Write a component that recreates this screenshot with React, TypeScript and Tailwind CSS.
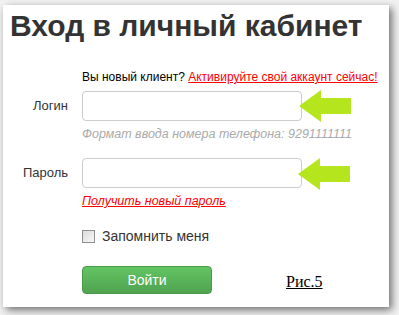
import React from 'react';

const Arrow: React.FC<{ className?: string }> = ({ className }) => (
  <svg className={className} width="52" height="32" viewBox="0 0 52 32">
    <polygon points="0,16 22,0 22,8 52,8 52,24 22,24 22,32" fill="#b5e61d" />
  </svg>
);

const App: React.FC = () => {
  return (
    <div className="w-[399px] h-[315px] bg-[#f2f2f2] pt-[5px] pl-[3px] font-['Liberation_Sans',Arial,sans-serif]">
      <div className="relative w-[386px] h-[302px] bg-white shadow-[3px_3px_8px_rgba(0,0,0,0.55)]">
        <h1 className="pl-[7px] pt-[3px] text-[30px] leading-[36px] font-bold text-[#333]">
          Вход в личный кабинет
        </h1>

        <p className="mt-[26px] pl-[79px] text-[12px] leading-[14px] text-black">
          Вы новый клиент?{' '}
          <a href="#" className="text-[#ff0000] underline">Активируйте свой аккаунт сейчас!</a>
        </p>

        <div className="mt-[7px] flex items-center">
          <label className="w-[65px] text-right text-[13px] text-[#333]">Логин</label>
          <input className="ml-[14px] w-[220px] h-[30px] rounded-[4px] border border-[#ccc] bg-white" />
        </div>
        <p className="mt-[6px] pl-[79px] text-[12.5px] leading-[15px] italic text-[#aaa]">
          Формат ввода номера телефона: 9291111111
        </p>

        <div className="mt-[16px] flex items-center">
          <label className="w-[65px] text-right text-[13px] text-[#333]">Пароль</label>
          <input type="password" className="ml-[14px] w-[220px] h-[30px] rounded-[4px] border border-[#ccc] bg-white" />
        </div>
        <p className="mt-[6px] pl-[79px] text-[12.5px] leading-[15px]">
          <a href="#" className="italic text-[#ff0000] underline">Получить новый пароль</a>
        </p>

        <div className="mt-[19px] pl-[79px] flex items-center gap-[7px]">
          <span className="w-[13px] h-[13px] border border-[#8f8f8f] bg-gradient-to-br from-[#dcdcdc] to-[#f8f8f8]" />
          <span className="text-[14px] leading-[16px] text-[#333]">Запомнить меня</span>
        </div>

        <div className="mt-[22px] pl-[79px] flex items-center">
          <button className="w-[130px] h-[28px] rounded-[4px] border border-[#4a9a4a] bg-gradient-to-b from-[#62c462] to-[#51a351] text-[14px] text-white">
            Войти
          </button>
          <span className="ml-[74px] mt-[4px] font-['Liberation_Serif',serif] text-[16px] text-black underline">
            Рис.5
          </span>
        </div>

        <Arrow className="absolute left-[296px] top-[85px]" />
        <Arrow className="absolute left-[295px] top-[153px]" />
      </div>
    </div>
  );
};

export default App;
